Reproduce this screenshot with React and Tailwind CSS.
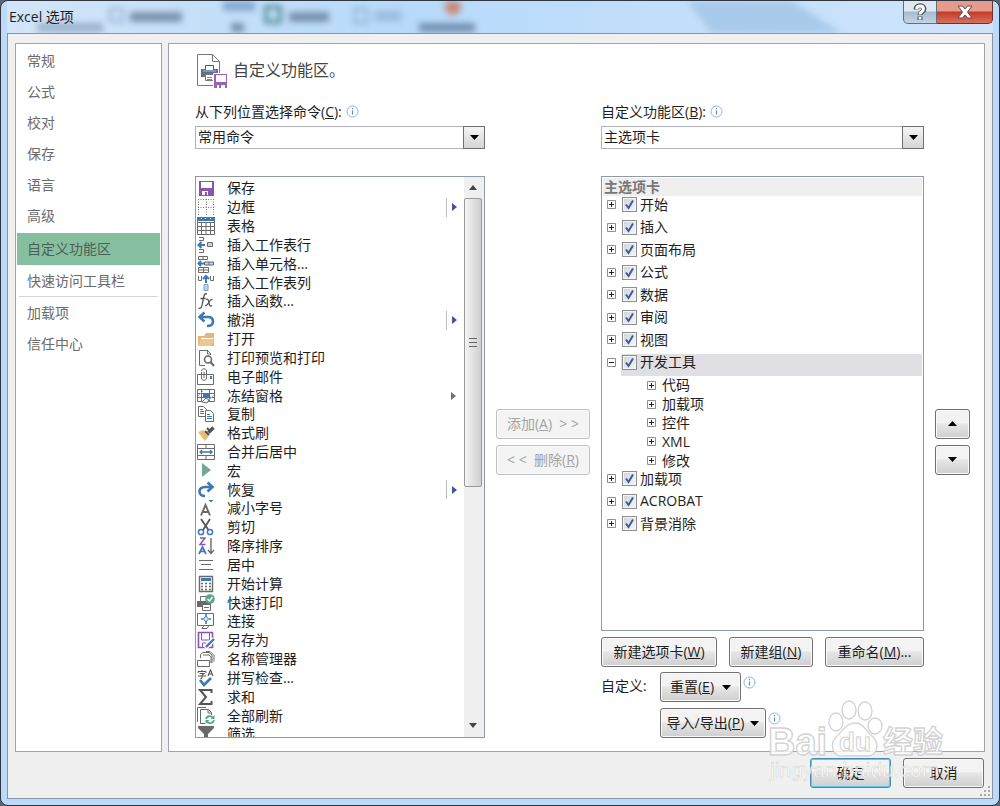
import { useState } from 'react';

const G = '#6a6a6a';
const B = '#3b78b5';
const P = '#8a55b0';

const icons = {
  save: (
    <>
      <path fill={P} d="M2 2h15v15H2z" />
      <path fill="#fff" d="M4 3h11v6H4zM5 12h9v4H5z" />
      <path fill={P} d="M8 13h2v3H8zM11 12h3v4h-3z" />
    </>
  ),
  border: (
    <path d="M1 1.5h16M1 9.5h16M1.5 1v16M9.5 1v16M16.5 1v16" stroke="#777" strokeDasharray="1 1.5" fill="none" />
  ),
  table: (
    <>
      <path d="M.5 1.5h17v16H.5zM.5 5.500h17M.5 9.500h17M.5 13.500h17M4.500 5v12M9 5v12M13.500 5v12" stroke={G} fill="none" />
      <path fill={B} d="M0 0h18v4H0z" />
      <path fill="#fff" d="M4 1h1v1H4zM8 1h1v1H8zM13 1h1v1h-1z" />
    </>
  ),
  rows: (
    <>
      <path d="M2 1.500h4.500v3H2M2 13.500h4.500v3H2" stroke={G} fill="none" />
      <path d="M8 9H2M4.500 6L1.500 9l3 3" stroke={B} strokeWidth="2" fill="none" />
      <path d="M10.500 6.500h5v4h-5z" stroke={G} fill="#bcd6ee" />
    </>
  ),
  cells: (
    <>
      <path d="M1.500 1.500h9v3h-9zM6 1v3M1.500 12.500h10v5h-10zM1.500 15h10M6.500 12v5" stroke={G} fill="none" />
      <path d="M7 8.500H2M4 6L1.500 8.500 4 11" stroke={B} strokeWidth="2" fill="none" />
      <path d="M7.500 7h9v3h-9zM12 7v3" stroke={G} fill="#bcd6ee" />
    </>
  ),
  cols: (
    <>
      <path d="M1.500 2v4.500h3V2M13.500 2v4.500h3V2" stroke={G} fill="none" />
      <path d="M9 9V2M6 5l3-3 3 3" stroke={B} strokeWidth="2" fill="none" />
      <path d="M7 10.500h4v6H7z" stroke="#7f9fc0" fill="#bcd6ee" />
    </>
  ),
  fx: (
    <path
      d="M10 2C7.500 1 7 3.500 6.500 6L5 13c-.4 2.500-1.500 4-3.500 3M3.500 6.500h5M9 7.500c2-1.500 2.500 1 3 3.500.4 2 1 4 3 2.500M15.500 7.500c-2-.5-3 2-4 3.500s-1.800 3-3.500 2.500"
      stroke="#555"
      strokeWidth="1.300"
      fill="none"
    />
  ),
  undo: (
    <path d="M3 6h8c3 0 5 1.500 5 4.500S13.500 15 10 15M7.500 1.500L2.500 6l5 4.500" stroke={B} strokeWidth="2.600" fill="none" />
  ),
  redo: (
    <path d="M15 6H8c-3.500 0-5.500 2-5.500 4.500S4.500 15 8 15M10.500 1.500l5 4.500-5 4.500" stroke={B} strokeWidth="2.600" fill="none" />
  ),
  open: (
    <>
      <path fill="#e6b876" d="M1 6h6l2-3h8v13H1z" />
      <path fill="#fff" d="M4 8h12v1H4z" />
      <path fill="#efc78a" d="M4 9h13l-3 7H1z" />
    </>
  ),
  preview: (
    <>
      <path d="M13.500 6V4.500l-3-3h-8v15H8M10.500 1v4h3" stroke={G} fill="none" />
      <circle cx="11" cy="10.500" r="3.500" stroke={G} strokeWidth="1.600" fill="#fff" />
      <path d="M13.500 13l3.500 4" stroke={G} strokeWidth="2" />
    </>
  ),
  mail: (
    <>
      <path d="M.5 6.500h16v10H.5z" stroke={G} fill="#fff" />
      <path d="M4.500 4v6c0 3 5 3 5 0V3c0-3-5-3-5 0M7 4v6" stroke={G} fill="none" />
      <path fill={B} d="M13 8h2v3h-2z" />
    </>
  ),
  freeze: (
    <>
      <path d="M.5 2.500h17v12H.5zM.5 6.500h17M.5 10.500h17M4.500 2v12M12.500 2v12" stroke={G} fill="none" />
      <path fill={B} d="M6 6h6v4H6z" />
      <path d="M1 9l5-5M12 13l5-5" stroke="#8fb6da" />
      <path d="M5 15l4-4 3 2-2 3z" stroke={G} fill="#fff" />
    </>
  ),
  copy: (
    <>
      <path d="M1.500 1.500h5l3 3v7h-8z" stroke={G} fill="#fff" />
      <path d="M8.500 5.500h5l3 3v8h-8z" stroke={G} fill="#fff" />
      <path d="M3 4.500h3M3 6.500h4M3 8.500h4M10 9.500h3M10 11.500h5M10 13.500h5" stroke={B} />
    </>
  ),
  brush: (
    <>
      <path d="M1 8l5-2 6 6-4 5z" fill="#e9bb77" />
      <path d="M8 7l4 4M11 8l5-5M12 9l5-5M10 4l3 3" stroke="#555" strokeWidth="2.200" />
    </>
  ),
  merge: (
    <>
      <path d="M.5 1.500h17v15H.5zM.5 5.500h17M.5 12.500h17M9 1v4M9 13v4" stroke={G} fill="none" />
      <path d="M3 9h12M5 7L3 9l2 2M13 7l2 2-2 2" stroke={B} strokeWidth="1.300" fill="none" />
    </>
  ),
  macro: <path fill="#72a794" d="M5 1l9 7-9 7z" />,
  shrink: (
    <>
      <path d="M4 16.500L8.500 6l4.500 10.500M5.500 13h6" stroke={G} strokeWidth="1.900" fill="none" />
      <path fill={B} d="M11.500 1h5L14 3.500z" />
    </>
  ),
  cut: (
    <>
      <path d="M4 1l7.500 11M13 1L6 12" stroke="#555" strokeWidth="1.800" />
      <circle cx="4" cy="14" r="2.600" stroke={B} strokeWidth="1.500" fill="none" />
      <circle cx="13" cy="14" r="2.600" stroke={B} strokeWidth="1.500" fill="none" />
    </>
  ),
  sort: (
    <>
      <path d="M3 1h5L3 7.500h5.500" stroke={P} strokeWidth="1.500" fill="none" />
      <path d="M2 17l3.500-7L9 17M3.500 14.500h4" stroke={B} strokeWidth="1.700" fill="none" />
      <path d="M14 1v15M11 13l3 3.500 3-3.500" stroke={G} strokeWidth="1.400" fill="none" />
    </>
  ),
  center: <path d="M2 4.500h14M4 8.500h10M2 13.500h14" stroke={G} />,
  calc: (
    <>
      <path d="M2.500 1.500h13v15h-13z" stroke={G} strokeWidth="1.400" fill="#fff" />
      <path fill={B} d="M4 3h10v3H4z" />
      <path d="M4 8.500h10M4 11.500h10M4 14.500h10" stroke={G} strokeWidth="1.600" strokeDasharray="2 2" />
    </>
  ),
  quickprint: (
    <>
      <path d="M3.500 7V2.500h6" stroke={G} fill="none" />
      <path fill={G} d="M0 7h14v6H0z" />
      <path d="M5.500 10.500h8v6h-8z" stroke={G} fill="#fff" />
      <path d="M7 13.500h5" stroke={B} />
      <circle cx="13" cy="5" r="4.800" fill="#5ba58a" />
      <path d="M10.500 5l2 2 3-4" stroke="#fff" strokeWidth="1.300" fill="none" />
    </>
  ),
  connect: (
    <>
      <path d="M.5 1.500h16v12H.5z" stroke={G} fill="#fff" />
      <path d="M5 16.500l2-3h5l-2 3z" stroke={G} fill="#fff" />
      <path d="M9 4l2.500 3L9 10 6.500 7z" stroke={B} fill="#dcebf8" />
      <path d="M4 7h2M12 7h2M9 2v2M9 10v2" stroke={B} strokeWidth="1.600" />
    </>
  ),
  saveas: (
    <>
      <path d="M1.500 1.500h14v15h-14z" stroke={P} strokeWidth="1.600" fill="#fff" />
      <path d="M4.500 1v8h8V1M5.500 16v-4H9" stroke={P} fill="none" />
      <path d="M8 17l9-9" stroke="#fff" strokeWidth="5" />
      <path d="M9 16l8-8" stroke={B} strokeWidth="2.400" />
    </>
  ),
  names: (
    <>
      <path d="M3.500 8V4.500L6 2.500h6l3 2.500v8M6 5h6l2 2v6M9 1.500h4l4 4v6" stroke={G} fill="none" />
      <path d="M.5 10.500h12v6H.5z" stroke={G} fill="#fff" />
    </>
  ),
  spell: (
    <>
      <path d="M1 4V2.500h8V4M5 1v1M2.500 4.500h5L5 6v3.500H3.500M1 7h8" stroke="#555" fill="none" />
      <path d="M11 7l2.500-6L16 7M12 5h3" stroke="#555" strokeWidth="1.200" fill="none" />
      <path d="M3 11l4 5 7-7" stroke={B} strokeWidth="2.600" fill="none" />
    </>
  ),
  sum: <path d="M14.500 5V2H3l6 7-6 7h11.500v-3" stroke="#555" strokeWidth="2" fill="none" />,
  refresh: (
    <>
      <path d="M.5 15V.5H9M14.500 8V5.500l-3-3h-8v14H8M11 2v4h4" stroke={G} fill="none" />
      <path d="M9 12c.5-3 5-4 7-1M17 13c-.5 3-5 4.500-7 1.500" stroke="#5ba58a" strokeWidth="1.800" fill="none" />
      <path fill="#5ba58a" d="M17.500 8v4h-4zM8.500 17v-4h4z" />
    </>
  ),
  filter: <path fill={G} d="M1 1h16v2l-6 6v7H7V9L1 3z" />,
};

const commands = [
  { icon: 'save', name: '保存' },
  { icon: 'border', name: '边框', menu: 'split' },
  { icon: 'table', name: '表格' },
  { icon: 'rows', name: '插入工作表行' },
  { icon: 'cells', name: '插入单元格...' },
  { icon: 'cols', name: '插入工作表列' },
  { icon: 'fx', name: '插入函数...' },
  { icon: 'undo', name: '撤消', menu: 'split' },
  { icon: 'open', name: '打开' },
  { icon: 'preview', name: '打印预览和打印' },
  { icon: 'mail', name: '电子邮件' },
  { icon: 'freeze', name: '冻结窗格', menu: 'plain' },
  { icon: 'copy', name: '复制' },
  { icon: 'brush', name: '格式刷' },
  { icon: 'merge', name: '合并后居中' },
  { icon: 'macro', name: '宏' },
  { icon: 'redo', name: '恢复', menu: 'split' },
  { icon: 'shrink', name: '减小字号' },
  { icon: 'cut', name: '剪切' },
  { icon: 'sort', name: '降序排序' },
  { icon: 'center', name: '居中' },
  { icon: 'calc', name: '开始计算' },
  { icon: 'quickprint', name: '快速打印' },
  { icon: 'connect', name: '连接' },
  { icon: 'saveas', name: '另存为' },
  { icon: 'names', name: '名称管理器' },
  { icon: 'spell', name: '拼写检查...' },
  { icon: 'sum', name: '求和' },
  { icon: 'refresh', name: '全部刷新' },
  { icon: 'filter', name: '筛选' },
];

const mainTabs = [
  { name: '开始' },
  { name: '插入' },
  { name: '页面布局' },
  { name: '公式' },
  { name: '数据' },
  { name: '审阅' },
  { name: '视图' },
  { name: '开发工具', groups: ['代码', '加载项', '控件', 'XML', '修改'] },
  { name: '加载项' },
  { name: 'ACROBAT' },
  { name: '背景消除' },
];

const pages = ['常规', '公式', '校对', '保存', '语言', '高级', '自定义功能区', '快速访问工具栏'];
const addinPages = ['加载项', '信任中心'];

function Info() {
  return (
    <svg viewBox="0 0 13 13" className="h-[13px] w-[13px] shrink-0" aria-hidden="true">
      <circle cx="6.5" cy="6.5" r="5.500" fill="#fff" stroke="#8fb1e0" />
      <path d="M6.500 5.500v4M6.500 3v1.300" stroke="#5a87c8" strokeWidth="1.200" />
    </svg>
  );
}

function Down() {
  return (
    <svg viewBox="0 0 9 5" className="h-[5px] w-[9px] shrink-0" aria-hidden="true">
      <path d="M0 0h9L4.500 5z" />
    </svg>
  );
}

function Button({ className = '', primary, children, ...props }) {
  return (
    <button
      type="button"
      className={`flex h-[30px] items-center justify-center rounded-[3px] border bg-linear-to-b from-[#f3f3f3] from-45% via-[#e6e6e6] via-50% to-[#cfcfcf] whitespace-nowrap disabled:border-[#bfc3c6] disabled:from-[#f4f4f4] disabled:via-[#f4f4f4] disabled:to-[#f4f4f4] disabled:text-[#a3a3a3] ${
        primary ? 'border-[#3c8fb8] shadow-[inset_0_0_0_1px_#5fc8ee]' : 'border-[#707070] shadow-[inset_0_0_0_1px_#fafafa]'
      } ${className}`}
      {...props}
    >
      {children}
    </button>
  );
}

function Dropdown({ id, value }) {
  return (
    <div className="relative mt-1 h-[23px]">
      <select
        id={id}
        defaultValue={value}
        className="block h-full w-full appearance-none border border-[#b2b4bd] bg-white pr-6 pb-[2px] pl-[2px] leading-5 outline-none"
      >
        <option>{value}</option>
      </select>
      <span className="pointer-events-none absolute top-0 right-0 flex h-full w-[22px] items-center justify-center border border-[#707070] bg-linear-to-b from-[#f5f5f5] to-[#d4d4d4]">
        <Down />
      </span>
    </div>
  );
}

function Toggle({ open, ...props }) {
  return (
    <button type="button" className="h-[9px] w-[9px] shrink-0" {...props}>
      <svg viewBox="0 0 9 9" className="block h-[9px] w-[9px]">
        <path d="M.5.5h8v8h-8z" fill="#fff" stroke="#8e8e8e" />
        <path d={open ? 'M2 4.500h5' : 'M2 4.500h5M4.500 2v5'} stroke="#222" />
      </svg>
    </button>
  );
}

function TabRow({ tab }) {
  const [checked, setChecked] = useState(true);
  const [open, setOpen] = useState(Boolean(tab.groups));

  return (
    <li className="group">
      <div className="flex h-[22px] items-stretch pl-1 group-odd:h-[23px]">
        <div className="flex w-[14px] items-center pb-[6px]">
          <Toggle open={open} aria-label={tab.name} onClick={() => setOpen(!open)} />
        </div>
        <label className={`flex flex-1 items-center pb-[6px] pl-px ${tab.groups ? 'bg-[#e0dfe4]' : ''}`}>
          <span className="grid h-[15px] w-[15px] shrink-0">
            <input
              type="checkbox"
              checked={checked}
              onChange={() => setChecked(!checked)}
              className="col-start-1 row-start-1 h-[15px] w-[15px] appearance-none border border-[#8e8f8f] bg-linear-to-br from-[#cfd3da] to-[#f7f7f7] shadow-[inset_0_0_0_1px_#f4f4f4]"
            />
            {checked && (
              <svg viewBox="0 0 15 15" className="pointer-events-none col-start-1 row-start-1 h-[15px] w-[15px]">
                <path d="M4 7.500l2.500 3.500L11 3.500" fill="none" stroke="#43589c" strokeWidth="2" />
              </svg>
            )}
          </span>
          <span className="pl-[3px]">{tab.name}</span>
        </label>
      </div>
      {tab.groups && open && (
        <ul className="flex h-[94px] flex-col pl-11">
          {tab.groups.map((name) => (
            <li key={name} className="flex min-h-0 flex-1 items-center gap-[6px]">
              <Toggle open={false} aria-label={name} />
              {name}
            </li>
          ))}
        </ul>
      )}
    </li>
  );
}

function TitleBar() {
  return (
    <header className="relative flex h-8 shrink-0 items-center justify-between overflow-hidden bg-linear-to-r from-[#d3e5f8] via-[#b7dafb] via-40% to-[#cfe4fb]">
      {/* window behind the glass */}
      <svg aria-hidden="true" className="absolute inset-0 h-8 w-full blur-[3px]">
        <path d="M680 0h105l50 32H705z" fill="#9cc0e2" opacity="0.700" />
        <g fill="#48617d" opacity="0.600">
          <path d="M30 22h66v9H30z" opacity="0.600" />
          <path d="M123 11h52v10h-52zM224 22h13v9h-13zM282 11h40v10h-40zM412 22h56v9h-56z" />
          <path d="M367 10h28v10h-28z" opacity="0.400" />
        </g>
        <path d="M103 8h13v12h-13zM348 8h12v14h-12z" fill="none" stroke="#8aa5c5" strokeWidth="2" />
        <path d="M216 0h32v10h-32z" fill="#86a9d0" />
        <path d="M259 6h14v15h-14z" fill="none" stroke="#3c7a80" strokeWidth="3" />
        <circle cx="446" cy="6" r="8" fill="#c98a78" />
      </svg>
      <h1 className="relative pl-[2px]">Excel 选项</h1>
      <div className="relative flex self-start">
        <button
          type="button"
          aria-label="帮助"
          className="flex h-[23px] w-[34px] items-center justify-center rounded-bl-[5px] border border-t-0 border-[#5f6f82] bg-linear-to-b from-[#dfe9f4] from-45% via-[#a9bbd0] via-50% to-[#c3d3e5]"
        >
          <svg viewBox="0 0 14 18" className="h-[18px] w-[14px]">
            <path d="M3 6.500c0-5 8-5 8-.5 0 3-4 2.500-4 6M7 13.500V17" fill="none" stroke="#515965" strokeWidth="5" />
            <path d="M3.500 6c.5-4 7-4 7 0 0 3-3.500 2.500-3.500 5.500M7 14v2.500" fill="none" stroke="#fff" strokeWidth="2.800" />
          </svg>
        </button>
        <button
          type="button"
          aria-label="关闭"
          className="flex h-[23px] w-[56px] items-center justify-center rounded-br-[5px] border border-t-0 border-l-0 border-[#6d3030] bg-linear-to-b from-[#e79b8f] from-45% via-[#c33a26] via-50% to-[#d9705c]"
        >
          <svg viewBox="0 0 16 14" className="h-[14px] w-4">
            <path
              d="M1 1h4.500L8 4l2.500-3H15l-4.500 6 4.500 6h-4.500L8 10l-2.500 3H1l4.500-6z"
              fill="#fff"
              stroke="#5c4a50"
            />
          </svg>
        </button>
      </div>
    </header>
  );
}

function Sidebar() {
  return (
    <nav className="w-[147px] shrink-0 border border-[#a0a3ab] bg-white px-px pt-px text-[#6b6b6b]">
      {pages.map((page) => (
        <a
          key={page}
          href="#"
          className={`flex items-center pl-[10px] ${page === '自定义功能区' ? 'mt-[2px] h-8 bg-[#86bfa0] text-[#4c5f55]' : 'h-[31px]'}`}
        >
          {page}
        </a>
      ))}
      <div className="mx-[2px] border-t border-[#d5d5d5]">
        {addinPages.map((page) => (
          <a key={page} href="#" className="flex h-[31px] items-center pl-2">
            {page}
          </a>
        ))}
      </div>
    </nav>
  );
}

function CommandList() {
  return (
    <div className="mt-[27px] flex min-h-0 flex-1 overflow-hidden border border-[#9299a3] bg-white">
      <div className="min-w-0 flex-1 overflow-hidden pt-[2px]">
        <ul className="flex h-[565px] flex-col">
          {commands.map((cmd) => (
            <li key={cmd.name} className="flex min-h-0 flex-1 items-center pl-px">
              <svg viewBox="0 0 18 18" className="h-[18px] w-[18px] shrink-0" aria-hidden="true">
                {icons[cmd.icon]}
              </svg>
              <span className="flex-1 pl-3 leading-[18px]">{cmd.name}</span>
              {cmd.menu && (
                <span className={`flex h-full items-center ${cmd.menu === 'split' ? 'border-l border-[#b9b9b9] pr-[7px] pl-[5px]' : 'pr-2'}`}>
                  <svg viewBox="0 0 5 8" className="h-2 w-[5px]" aria-hidden="true">
                    <path d="M0 0l5 4-5 4z" fill={cmd.menu === 'split' ? '#4055a0' : '#707070'} />
                  </svg>
                </span>
              )}
            </li>
          ))}
        </ul>
      </div>
      <div aria-hidden="true" className="flex w-5 shrink-0 flex-col items-center bg-[#efefef] pr-[2px]">
        <svg viewBox="0 0 8 5" className="my-2 h-[5px] w-2 shrink-0">
          <path d="M0 5h8L4 0z" fill="#444" />
        </svg>
        <div className="flex h-[289px] w-[18px] flex-col items-center justify-center gap-[3px] rounded-[2px] border border-[#9a9a9a] bg-linear-to-r from-[#f3f3f3] to-[#cfcfd2]">
          <span className="h-px w-2 bg-[#666]" />
          <span className="h-px w-2 bg-[#666]" />
          <span className="h-px w-2 bg-[#666]" />
        </div>
        <svg viewBox="0 0 8 5" className="mt-auto mb-[9px] h-[5px] w-2 shrink-0">
          <path d="M0 0h8L4 5z" fill="#444" />
        </svg>
      </div>
    </div>
  );
}

function Watermark() {
  return (
    <svg
      viewBox="0 0 190 90"
      aria-hidden="true"
      className="pointer-events-none absolute right-[42px] bottom-[15px] h-[90px] w-[190px]"
      fontFamily="Liberation Sans, Noto Sans CJK SC, sans-serif"
      fill="#fff"
      stroke="#d2d2d2"
    >
      <g fillOpacity="0.8" strokeWidth="1.300">
        <ellipse cx="69" cy="22" rx="7" ry="9" />
        <ellipse cx="82" cy="10" rx="7" ry="9" />
        <ellipse cx="98" cy="11" rx="7" ry="9" />
        <ellipse cx="108" cy="26" rx="7" ry="8" />
        <path d="M88 23c8 0 11 8 17 13 8 7 6 20-5 20-8 0-16-1-24 0-11 1-14-13-6-20 6-5 9-13 18-13z" />
        <text x="1" y="55" fontSize="38" fontWeight="700">Bai</text>
        <text x="72" y="51" fontSize="26" fontWeight="700" strokeWidth="1">du</text>
        <text x="116" y="52" fontSize="30" fontWeight="700">经验</text>
      </g>
      <text x="3" y="77" fontSize="21" strokeWidth="0.500" fillOpacity="0.800">
        jingyan.baidu.com
      </text>
    </svg>
  );
}

export default function App() {
  return (
    <div className="h-screen min-h-[640px] bg-[#5b6470] font-['Open_Sans','Noto_Sans_CJK_SC',sans-serif] text-[14px] leading-5 text-[#1e1e1e]">
      <div className="relative flex h-full flex-col overflow-hidden rounded-lg border border-[#2f3640] bg-[#bcdafa] px-[6px] pb-[6px]">
        <TitleBar />
        <div className="flex min-h-0 flex-1 flex-col border border-[#8a95a3] bg-[#f0f0f0] px-[7px] pt-[9px]">
          <div className="flex min-h-0 flex-1 gap-[6px]">
            <Sidebar />
            <main className="flex min-w-0 flex-1 flex-col border border-[#a0a3ab] bg-white pt-[10px] pr-[14px] pb-[13px] pl-[26px]">
              <div className="flex h-[35px] shrink-0 gap-[5px]">
                <svg viewBox="0 0 33 35" className="h-[35px] w-[33px] shrink-0" aria-hidden="true">
                  <path d="M2.500.500h15l7 7v24h-22zM17.500.500v7h7" fill="#fff" stroke="#777" />
                  <path fill="#69717b" d="M6 15h17v8H6z" />
                  <path d="M10.500 11.500h8v5h-8z" fill="#fff" stroke="#555" />
                  <path d="M8 17h13" stroke="#6a9ed0" strokeWidth="2" />
                  <path d="M10.500 20.500h8v6h-8z" fill="#fff" stroke="#777" />
                  <path d="M12 23.500h5M12 25.500h5" stroke="#5b93c9" />
                  <path fill="#9a62bd" stroke="#fff" d="M18.500 19.500h14v15h-14z" />
                  <path fill="#fff" d="M21 21h10v7H21zM22 31h8v3h-8z" />
                  <path fill="#9a62bd" d="M24 31h2v3h-2z" />
                </svg>
                <h2 className="pt-[6px] text-[16px] text-[#444]">自定义功能区。</h2>
              </div>

              <div className="mt-[13px] grid min-h-0 flex-1 grid-cols-[290fr_94px_323fr_35px] gap-[11px]">
                <section className="flex min-h-0 min-w-0 flex-col">
                  <div className="flex h-5 shrink-0 gap-1">
                    <label htmlFor="from">从下列位置选择命令(<u>C</u>):</label>
                    <span className="pt-[3px]"><Info /></span>
                  </div>
                  <Dropdown id="from" value="常用命令" />
                  <CommandList />
                </section>

                <div className="flex flex-col justify-center gap-[6px] pt-[43px]">
                  <Button disabled>添加(<u>A</u>)&nbsp;&nbsp;&gt;&nbsp;&gt;</Button>
                  <Button disabled>&lt;&nbsp;&lt;&nbsp;&nbsp;删除(<u>R</u>)</Button>
                </div>

                <section className="flex min-h-0 min-w-0 flex-col">
                  <div className="flex h-5 shrink-0 gap-1">
                    <label htmlFor="ribbon">自定义功能区(<u>B</u>):</label>
                    <span className="pt-[3px]"><Info /></span>
                  </div>
                  <Dropdown id="ribbon" value="主选项卡" />
                  <div className="mt-[27px] min-h-0 flex-1 overflow-hidden border border-[#9299a3] bg-white p-px">
                    <div className="h-[18px] bg-[#efefef] pl-px leading-[18px] font-semibold text-[#777]">主选项卡</div>
                    <ul>
                      {mainTabs.map((tab) => (
                        <TabRow key={tab.name} tab={tab} />
                      ))}
                    </ul>
                  </div>
                  <div className="mt-[6px] flex justify-between">
                    <Button className="w-[116px]">新建选项卡(<u>W</u>)</Button>
                    <Button className="w-[84px]">新建组(<u>N</u>)</Button>
                    <Button className="w-[99px]">重命名(<u>M</u>)...</Button>
                  </div>
                  <div className="mt-[5px] flex">
                    <span className="w-[59px] pt-1">自定义:</span>
                    <Button className="mr-[2px] w-[81px] gap-2"><span>重置(<u>E</u>)</span><Down /></Button>
                    <span className="pt-1"><Info /></span>
                  </div>
                  <div className="mt-[6px] flex pl-[59px]">
                    <Button className="mr-[2px] w-[106px] gap-[6px]"><span>导入/导出(<u>P</u>)</span><Down /></Button>
                    <span className="pt-1"><Info /></span>
                  </div>
                </section>

                <div className="flex flex-col justify-center gap-[6px] pt-[43px]">
                  <Button aria-label="上移"><span className="rotate-180"><Down /></span></Button>
                  <Button aria-label="下移"><Down /></Button>
                </div>
              </div>
            </main>
          </div>
          <footer className="flex shrink-0 justify-end gap-3 pt-[6px] pr-px pb-[10px]">
            <Button primary className="w-[81px]">确定</Button>
            <Button className="w-[81px]">取消</Button>
          </footer>
        </div>
        <Watermark />
        <svg viewBox="0 0 12 12" className="pointer-events-none absolute right-[8px] bottom-[8px] h-3 w-3" aria-hidden="true">
          <path fill="#a9a9a9" d="M9 1h2v2H9zM9 5h2v2H9zM5 5h2v2H5zM9 9h2v2H9zM5 9h2v2H5zM1 9h2v2H1z" />
        </svg>
      </div>
    </div>
  );
}
